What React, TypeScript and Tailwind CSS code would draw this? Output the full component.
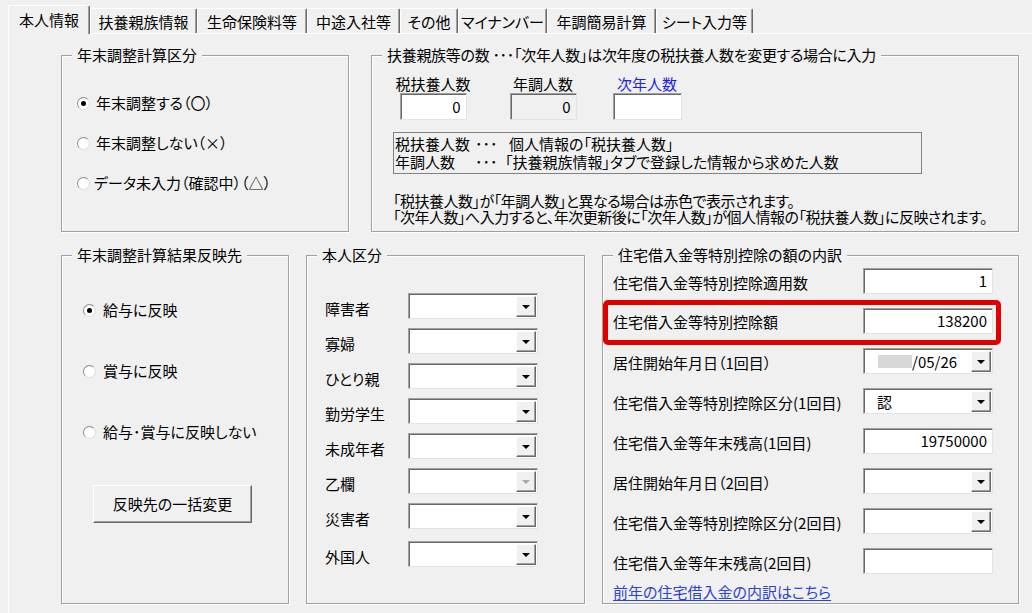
import React from "react";

const Radio = ({ checked }: { checked?: boolean }) => (
  <span className="w-[13px] h-[13px] shrink-0 rounded-full bg-white border border-t-[#8c8c8c] border-l-[#8c8c8c] border-r-[#dcdcdc] border-b-[#dcdcdc] flex items-center justify-center">
    {checked && <span className="w-[5px] h-[5px] rounded-full bg-black" />}
  </span>
);

const Arrow = ({ disabled }: { disabled?: boolean }) => (
  <svg width="8" height="4" viewBox="0 0 8 4">
    <path d="M0 0h8L4 4z" fill={disabled ? "#a8a8a8" : "#000"} />
  </svg>
);

const Combo = ({ children, disabled }: { children?: React.ReactNode; disabled?: boolean }) => (
  <div className="w-[130px] h-[26px] bg-white border border-t-[#a0a0a0] border-l-[#a0a0a0] border-r-[#e3e3e3] border-b-[#e3e3e3] shadow-[inset_1px_1px_0_#696969] flex items-stretch pt-[2px] pb-[1px] pr-[1px]">
    <div className="flex-1 flex items-center leading-[20px]">{children}</div>
    <div className="w-[20px] bg-[#f0f0f0] border border-t-white border-l-white border-r-[#696969] border-b-[#696969] shadow-[inset_-1px_-1px_0_#a0a0a0] flex items-center justify-center">
      <Arrow disabled={disabled} />
    </div>
  </div>
);

const Field = ({ value, w = "w-[130px]", h = "h-[26px]", bg = "bg-white" }: { value?: string; w?: string; h?: string; bg?: string }) => (
  <div className={`${w} ${h} ${bg} border border-t-[#a0a0a0] border-l-[#a0a0a0] border-r-[#e3e3e3] border-b-[#e3e3e3] shadow-[inset_1px_1px_0_#696969] flex items-center justify-end pr-[5px] leading-[20px]`}>
    {value}
  </div>
);

const Group = ({ title, className, legendClass = "", children }: { title: string; className: string; legendClass?: string; children?: React.ReactNode }) => (
  <fieldset className={`border border-[#a0a0a0] shadow-[inset_1px_1px_0_#fff,1px_1px_0_#fff] ${className}`}>
    <legend className={`ml-[10px] px-[5px] leading-[20px] bg-[#f0f0f0] whitespace-nowrap ${legendClass}`}>{title}</legend>
    {children}
  </fieldset>
);

const tabs: { label: string; w: string }[] = [
  { label: "扶養親族情報", w: "w-[107px]" },
  { label: "生命保険料等", w: "w-[110px]" },
  { label: "中途入社等", w: "w-[93px]" },
  { label: "その他", w: "w-[58px]" },
  { label: "マイナンバー", w: "w-[89px]" },
  { label: "年調簡易計算", w: "w-[109px]" },
  { label: "シート入力等", w: "w-[97px]" },
];

const honninRows = ["障害者", "寡婦", "ひとり親", "勤労学生", "未成年者", "乙欄", "災害者", "外国人"];

export default function App() {
  return (
    <div className="w-[1032px] h-[613px] overflow-hidden bg-[#f0f0f0] text-black text-[15px] font-['Meiryo_UI','Noto_Sans_CJK_JP',sans-serif] [font-feature-settings:'palt']">
      {/* Tabs */}
      <div className="flex items-end h-[28px] mt-[5px] ml-[8px]">
        <div className="relative z-10 -mb-px w-[82px] h-[29px] bg-[#f0f0f0] border-t border-l border-white border-r border-r-[#696969] shadow-[inset_-1px_0_0_#a0a0a0] rounded-tl-[2px] rounded-tr-[2px] flex items-center justify-center leading-[20px]">
          本人情報
        </div>
        {tabs.map((t) => (
          <div
            key={t.label}
            className={`${t.w} h-[25px] bg-[#f0f0f0] border-t border-l border-white border-r border-r-[#696969] shadow-[inset_-1px_0_0_#a0a0a0] rounded-tl-[2px] rounded-tr-[2px] flex items-center justify-center pt-[2px] leading-[20px] whitespace-nowrap`}
          >
            {t.label}
          </div>
        ))}
      </div>

      {/* Panel */}
      <div className="ml-[8px] h-[590px] border-t border-l border-white pt-[11px] pl-[52px] flex flex-col gap-[13px]">
        {/* Row 1 */}
        <div className="flex gap-[22px]">
          <Group title="年末調整計算区分" className="w-[288px] h-[187px]">
            <div className="pt-[28px] pl-[15px] flex flex-col gap-[20px] leading-[20px]">
              <div className="flex items-center gap-[6px]"><Radio checked /><span>年末調整する（〇）</span></div>
              <div className="flex items-center gap-[6px]"><Radio /><span>年末調整しない（×）</span></div>
              <div className="flex items-center gap-[4px]"><Radio /><span>データ未入力（確認中）（△）</span></div>
            </div>
          </Group>

          <Group title="扶養親族等の数 ･･･「次年人数」は次年度の税扶養人数を変更する場合に入力" className="w-[648px] h-[187px]" legendClass="tracking-[-0.3px]">
            <div className="pl-[21px] pt-[10px]">
              <div className="flex leading-[18px]">
                <div className="w-[80px] flex flex-col items-center gap-0">
                  <span className="whitespace-nowrap">税扶養人数</span>
                  <Field value="0" w="w-[67px]" h="h-[27px]" />
                </div>
                <div className="w-[80px] ml-[30px] flex flex-col items-center">
                  <span className="whitespace-nowrap">年調人数</span>
                  <Field value="0" w="w-[67px]" h="h-[27px]" bg="bg-[#f0f0f0]" />
                </div>
                <div className="w-[80px] ml-[24px] flex flex-col items-center">
                  <span className="whitespace-nowrap text-[#1c1cf0]">次年人数</span>
                  <Field w="w-[69px]" h="h-[27px]" />
                </div>
              </div>
              <div className="mt-[12px] w-[529px] h-[42px] border border-[#828282] pt-[2px] pl-px leading-[18px]">
                <div className="grid grid-cols-[80px_30px_1fr]">
                  <span>税扶養人数</span>
                  <span>･･･</span>
                  <span className="pl-[4px]">個人情報の「税扶養人数」</span>
                  <span>年調人数</span>
                  <span>･･･</span>
                  <span>「扶養親族情報」タブで登録した情報から求めた人数</span>
                </div>
              </div>
              <div className="mt-[19px] leading-[16px] whitespace-nowrap tracking-[-0.5px]">
                <div>「税扶養人数」が「年調人数」と異なる場合は赤色で表示されます。</div>
                <div>「次年人数」へ入力すると、年次更新後に「次年人数」が個人情報の「税扶養人数」に反映されます。</div>
              </div>
            </div>
          </Group>
        </div>

        {/* Row 2 */}
        <div className="flex gap-[17px]">
          <Group title="年末調整計算結果反映先" className="w-[228px] h-[359px]">
            <div className="pt-[35px] pl-[21px] flex flex-col gap-[41px] leading-[20px]">
              <div className="flex items-center gap-[7px]"><Radio checked /><span>給与に反映</span></div>
              <div className="flex items-center gap-[7px]"><Radio /><span>賞与に反映</span></div>
              <div className="flex items-center gap-[7px]"><Radio /><span>給与･賞与に反映しない</span></div>
            </div>
            <div className="mt-[43px] ml-[31px] w-[159px] h-[38px] bg-[#f0f0f0] border border-t-white border-l-white border-r-[#696969] border-b-[#696969] shadow-[inset_-1px_-1px_0_#a0a0a0] flex items-center justify-center leading-[20px]">
              反映先の一括変更
            </div>
          </Group>

          <Group title="本人区分" className="w-[279px] h-[359px]">
            <div className="pt-[28px] pl-[18px] flex flex-col gap-[9px]">
              {honninRows.map((r) => (
                <div key={r} className={`flex items-start ${r === "外国人" ? "mt-[3px]" : ""}`}>
                  <span className="w-[83px] h-[26px] pt-[6px] leading-[20px]">{r}</span>
                  <Combo disabled={r === "乙欄"} />
                </div>
              ))}
            </div>
          </Group>

          <Group title="住宅借入金等特別控除の額の内訳" className="w-[417px] h-[359px]">
            <div className="pt-[3px] pl-[10px] pr-[25px] flex flex-col gap-[14px] leading-[20px]">
              <div className="flex items-center">
                <span className="w-[250px] pt-[4px]">住宅借入金等特別控除適用数</span>
                <Field value="1" />
              </div>
              <div className="relative flex items-center">
                <span className="w-[250px] pt-[2px]">住宅借入金等特別控除額</span>
                <Field value="138200" />
                <div className="absolute -top-[8px] -bottom-[11px] -left-[10px] -right-[8px] border-[5px] border-[#e00000] rounded-[5px] pointer-events-none" />
              </div>
              <div className="flex items-center">
                <span className="w-[250px] pt-[4px]">居住開始年月日（1回目）</span>
                <Combo>
                  <span className="ml-[14px] w-[34px] h-[13px] bg-[#d8d8d8]" />
                  <span>/05/26</span>
                </Combo>
              </div>
              <div className="flex items-center">
                <span className="w-[250px] pt-[4px]">住宅借入金等特別控除区分(1回目)</span>
                <Combo>
                  <span className="ml-[13px]">認</span>
                </Combo>
              </div>
              <div className="flex items-center">
                <span className="w-[250px] pt-[4px]">住宅借入金等年末残高(1回目)</span>
                <Field value="19750000" />
              </div>
              <div className="flex items-center">
                <span className="w-[250px] pt-[4px]">居住開始年月日（2回目）</span>
                <Combo />
              </div>
              <div className="flex items-center">
                <span className="w-[250px] pt-[4px]">住宅借入金等特別控除区分(2回目)</span>
                <Combo />
              </div>
              <div className="flex items-center">
                <span className="w-[250px] pt-[4px]">住宅借入金等年末残高(2回目)</span>
                <Field />
              </div>
              <div className="-mt-[6px] text-[#2a44d4] underline underline-offset-2">前年の住宅借入金の内訳はこちら</div>
            </div>
          </Group>
        </div>
      </div>
    </div>
  );
}
